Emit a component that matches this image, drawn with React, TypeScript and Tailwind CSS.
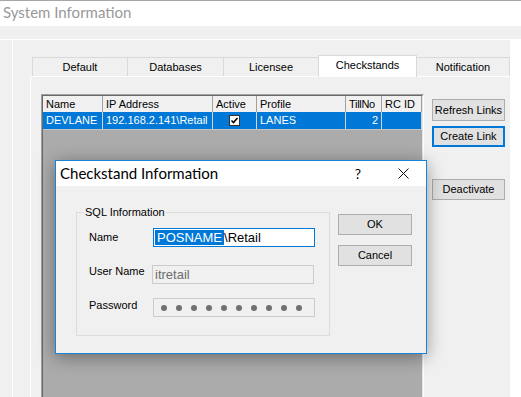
import React from "react";

function Btn({ children, className = "", focused = false }: { children: React.ReactNode; className?: string; focused?: boolean }) {
  return (
    <div
      className={
        "flex items-center justify-center bg-[#e1e1e1] text-[11px] text-black " +
        (focused ? "border-2 border-[#0078d7] " : "border border-[#adadad] ") +
        className
      }
    >
      {children}
    </div>
  );
}

export default function App() {
  return (
    <div className="relative w-[521px] h-[397px] overflow-hidden bg-[#f0f0f0] font-['Liberation_Sans',Arial,sans-serif] text-[11px] leading-[13px] text-black">
      {/* window title bar */}
      <div className="h-[26px] bg-white border-t border-[#a6a6a6] flex items-center pl-[3px] pb-[2px] font-['Lato',sans-serif] text-[15px] text-[#999999]">
        System Information
      </div>
      <div className="h-[13px]" />
      <div className="flex h-[360px] border-t border-white">
        <div className="w-[12px]" />
        <div className="w-[498px] border-l border-white pl-[17px] pt-[15px] flex flex-col">
          {/* tabs */}
          <div className="flex items-end h-[21px] pl-[2px]">
            <div className="w-[95px] h-[19px] border-t border-l border-[#d9d9d9] bg-[#f0f0f0] flex items-center justify-center">Default</div>
            <div className="w-[96px] h-[19px] border-t border-l border-[#d9d9d9] bg-[#f0f0f0] flex items-center justify-center">Databases</div>
            <div className="w-[95px] h-[19px] border-t border-l border-[#d9d9d9] bg-[#f0f0f0] flex items-center justify-center">Licensee</div>
            <div className="relative z-10 w-[99px] h-[22px] -mb-[1px] border-t border-l border-r border-[#d9d9d9] bg-white flex items-center justify-center pb-[3px]">Checkstands</div>
            <div className="w-[93px] h-[19px] border-t border-r border-[#d9d9d9] bg-[#f0f0f0] flex items-center justify-center">Notification</div>
          </div>
          {/* panel */}
          <div className="flex-1 w-[480px] border-t border-l border-white flex pl-[10px] pt-[17px] gap-[8px]">
            {/* grid */}
            <div className="w-[383px] flex-1 max-w-[383px] border-t border-l border-[#a0a0a0] border-r border-r-white flex">
              <div className="flex-1 border-t border-l border-[#696969] border-r border-r-[#e3e3e3] flex flex-col">
                <div className="flex h-[16px] bg-[#f0f0f0]">
                  <div className="w-[60px] border-r border-[#a0a0a0] pl-[3px] flex items-center">Name</div>
                  <div className="w-[110px] border-r border-[#a0a0a0] pl-[3px] flex items-center">IP Address</div>
                  <div className="w-[44px] border-r border-[#a0a0a0] pl-[3px] flex items-center">Active</div>
                  <div className="w-[89px] border-r border-[#a0a0a0] pl-[3px] flex items-center">Profile</div>
                  <div className="w-[36px] border-r border-[#a0a0a0] pl-[3px] flex items-center tracking-[-0.3px]">TillNo</div>
                  <div className="w-[40px] border-r border-[#a0a0a0] pl-[3px] flex items-center">RC ID</div>
                </div>
                <div className="flex h-[18px] bg-[#0078d7] text-white border-b border-[#c4c4c4]">
                  <div className="w-[60px] border-r border-[#d6d6d6] pl-[3px] flex items-center">DEVLANE</div>
                  <div className="w-[110px] border-r border-[#d6d6d6] pl-[3px] flex items-center">192.168.2.141\Retail</div>
                  <div className="w-[44px] border-r border-[#d6d6d6] flex items-center justify-center">
                    <div className="w-[11px] h-[11px] bg-white border border-[#333333] flex items-center justify-center">
                      <svg width="9" height="9" viewBox="0 0 9 9">
                        <path d="M1.5 4.5 L3.5 6.5 L7.5 2" stroke="#000" strokeWidth="1.6" fill="none" />
                      </svg>
                    </div>
                  </div>
                  <div className="w-[89px] border-r border-[#d6d6d6] pl-[3px] flex items-center">LANES</div>
                  <div className="w-[36px] border-r border-[#d6d6d6] pr-[3px] flex items-center justify-end">2</div>
                  <div className="w-[40px] border-r border-[#d6d6d6]" />
                </div>
                <div className="flex-1 bg-[#ababab]" />
              </div>
            </div>
            {/* buttons */}
            <div className="flex flex-col pt-[5px]">
              <Btn className="w-[73px] h-[22px]">Refresh Links</Btn>
              <Btn focused className="w-[73px] h-[21px] mt-[5px]">Create Link</Btn>
              <Btn className="w-[73px] h-[21px] mt-[32px]">Deactivate</Btn>
            </div>
          </div>
        </div>
        <div className="flex-1 bg-white" />
      </div>

      {/* dialog */}
      <div className="absolute left-[55px] top-[160px] w-[372px] h-[194px] border border-[#1883d7] bg-[#f0f0f0] shadow-[0_3px_16px_rgba(0,0,0,0.38)] flex flex-col">
        <div className="h-[25px] bg-white flex items-center pl-[4px] font-['Lato',sans-serif] text-[15px] text-black">
          <span>Checkstand Information</span>
          <span className="ml-auto text-[14px]">?</span>
          <svg className="ml-[37px] mr-[17px]" width="11" height="11" viewBox="0 0 11 11">
            <path d="M0.5 0.5 L10.5 10.5 M10.5 0.5 L0.5 10.5" stroke="#111" strokeWidth="1" />
          </svg>
        </div>
        <div className="flex pl-[20px] pt-[26px]">
          <div className="relative w-[254px] h-[124px] border border-[#dcdcdc] pl-[12px]">
            <div className="absolute -top-[7px] left-[7px] px-[1px] bg-[#f0f0f0]">SQL Information</div>
            <div className="flex items-start h-[19px] mt-[15px]">
              <div className="w-[64px] mt-[3px]">Name</div>
              <div className="w-[162px] h-[19px] bg-white border border-[#0078d7] flex items-center pl-[1px] text-[13px] leading-[15px]">
                <span className="bg-[#0078d7] text-white px-[2px]">POSNAME</span>
                <span>\Retail</span>
              </div>
            </div>
            <div className="flex items-start h-[19px] mt-[18px]">
              <div className="w-[63px] mt-0">User Name</div>
              <div className="w-[162px] h-[19px] bg-[#f0f0f0] border border-[#cccccc] flex items-center pl-[2px] text-[13px] text-[#6d6d6d]">
                itretail
              </div>
            </div>
            <div className="flex items-start h-[19px] mt-[14px]">
              <div className="w-[64px] mt-[1px]">Password</div>
              <div className="w-[162px] h-[19px] bg-[#f0f0f0] border border-[#cccccc] flex items-center pl-[7px] gap-[9px]">
                {Array.from({ length: 10 }).map((_, i) => (
                  <div key={i} className="w-[6px] h-[6px] rounded-full bg-[#707070]" />
                ))}
              </div>
            </div>
          </div>
          <div className="flex flex-col ml-[8px] mt-[2px] gap-[10px]">
            <Btn className="w-[74px] h-[21px]">OK</Btn>
            <Btn className="w-[74px] h-[21px]">Cancel</Btn>
          </div>
        </div>
      </div>
    </div>
  );
}
